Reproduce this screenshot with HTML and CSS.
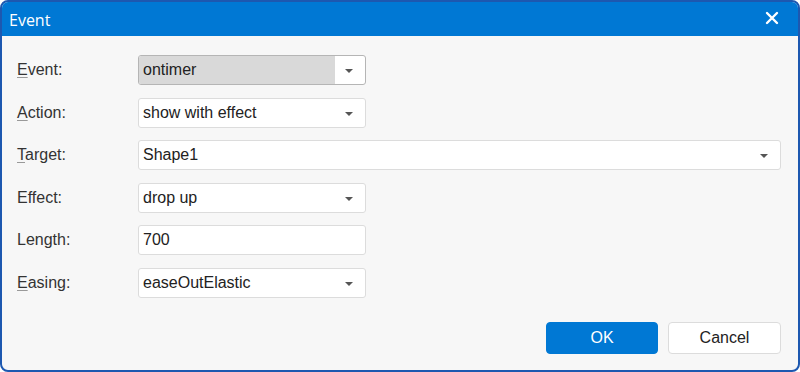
FILE: index.html
```html
<!DOCTYPE html>
<html>
<head>
<meta charset="utf-8">
<link rel="stylesheet" href="styles.css">
</head>
<body>
<div class="dialog">
  <div class="titlebar">
    <span class="title">Event</span>
    <svg class="close" width="14" height="14" viewBox="0 0 14 14"><path d="M2 2 L12 12 M12 2 L2 12" stroke="#fff" stroke-width="2.4" stroke-linecap="round"/></svg>
  </div>
  <div class="form">
    <div class="row">
      <label class="lbl"><u>E</u>vent:</label>
      <div class="field select short focused"><span class="val sel-val">ontimer</span><span class="arrow"></span></div>
    </div>
    <div class="row">
      <label class="lbl"><u>A</u>ction:</label>
      <div class="field select short"><span class="val">show with effect</span><span class="arrow"></span></div>
    </div>
    <div class="row">
      <label class="lbl"><u>T</u>arget:</label>
      <div class="field select wide"><span class="val">Shape1</span><span class="arrow"></span></div>
    </div>
    <div class="row">
      <label class="lbl">Effect:</label>
      <div class="field select short"><span class="val">drop up</span><span class="arrow"></span></div>
    </div>
    <div class="row">
      <label class="lbl">Length:</label>
      <div class="field short"><span class="val">700</span></div>
    </div>
    <div class="row">
      <label class="lbl"><u>E</u>asing:</label>
      <div class="field select short"><span class="val">easeOutElastic</span><span class="arrow"></span></div>
    </div>
  </div>
  <div class="buttons">
    <button class="btn primary">OK</button>
    <button class="btn">Cancel</button>
  </div>
</div>
</body>
</html>
```
FILE: styles.css
```css
* { box-sizing: border-box; }
html, body { margin: 0; padding: 0; background: #fff; }
body { font-family: "Liberation Sans", Arial, sans-serif; }
.dialog {
  width: 800px;
  height: 372px;
  border: 2px solid #1d58b0;
  border-radius: 8px;
  background: #f7f7f7;
  overflow: hidden;
  display: flex;
  flex-direction: column;
}
.titlebar {
  height: 34px;
  background: #0078d4;
  display: flex;
  align-items: center;
  justify-content: space-between;
  padding: 0 19px 0 7px;
  color: #fff;
}
.title {
  font-family: "Open Sans", "Noto Sans", sans-serif;
  font-size: 16px;
  position: relative;
  top: 1px;
}
.close { display: block; position: relative; top: -1px; }
.form {
  padding: 19px 17px 0 15px;
  display: flex;
  flex-direction: column;
  gap: 12.6px;
}
.row {
  display: flex;
  align-items: center;
  height: 30px;
}
.lbl {
  width: 121px;
  font-size: 16px;
  color: #333;
}
.lbl u { text-decoration-color: #999; text-underline-offset: 2px; }
.field {
  height: 30px;
  background: #fff;
  border: 1px solid #dcdcdc;
  border-radius: 3px;
  display: flex;
  align-items: center;
  position: relative;
  overflow: hidden;
}
.field.short { width: 228px; }
.field.wide { flex: 1; }
.field.focused { border-color: #b5b5b5; }
.val {
  font-size: 16px;
  color: #222;
  padding-left: 4px;
  flex: 1;
  height: 100%;
  display: flex;
  align-items: center;
}
.sel-val {
  background: #d9d9d9;
  flex: none;
  width: 196px;
}
.arrow {
  position: absolute;
  right: 12px;
  top: 13px;
  width: 0;
  height: 0;
  border-left: 4px solid transparent;
  border-right: 4px solid transparent;
  border-top: 4px solid #555;
}
.buttons {
  margin-top: auto;
  display: flex;
  justify-content: flex-end;
  gap: 10px;
  padding: 0 17px 16px 0;
}
.btn {
  width: 113px;
  height: 32px;
  border-radius: 4px;
  border: 1px solid #dcdcdc;
  background: #fff;
  font-family: "Liberation Sans", Arial, sans-serif;
  font-size: 16px;
  color: #222;
}
.btn.primary {
  width: 112px;
  background: #0078d4;
  border-color: #0078d4;
  color: #fff;
}
```
